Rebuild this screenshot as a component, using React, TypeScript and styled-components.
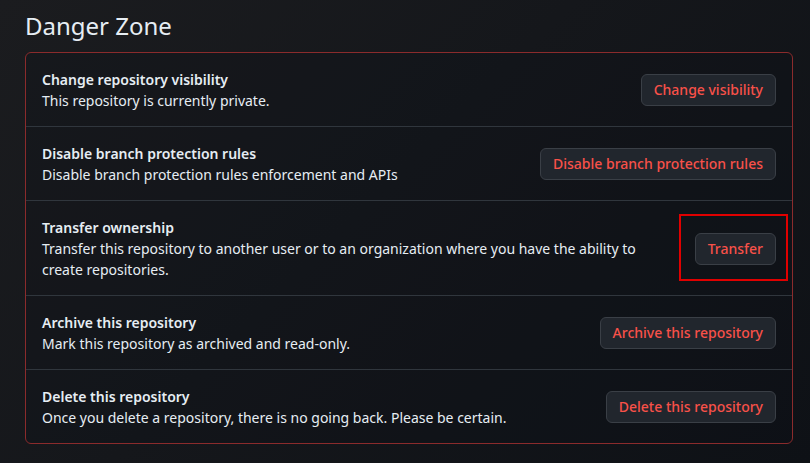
import React from "react";
import styled, { createGlobalStyle } from "styled-components";

const Global = createGlobalStyle`
  html, body { margin: 0; padding: 0; }
  body {
    width: 810px;
    height: 463px;
    overflow: hidden;
    font-family: "Noto Sans", "Open Sans", sans-serif;
    color: #e6edf3;
    background: linear-gradient(135deg, #1b1c1f 0%, #15171b 45%, #0e1116 100%);
  }
`;

const Page = styled.div`
  padding: 8px 17px 0 25px;
  height: 463px;
  box-sizing: border-box;
`;

const Heading = styled.h2`
  margin: 0 0 8px;
  font-size: 24px;
  line-height: 36px;
  font-weight: 400;
  color: #e6edf3;
`;

const Box = styled.div`
  border: 1px solid #8b2b2c;
  border-radius: 6px;
  display: flex;
  flex-direction: column;
  background: rgba(13, 17, 23, 0.25);
`;

const Row = styled.div<{ $last?: boolean }>`
  display: flex;
  align-items: center;
  gap: 16px;
  padding: 16px 16px 15px;
  border-bottom: ${(p) => (p.$last ? "none" : "1px solid #30363d")};
`;

const Info = styled.div`
  flex: 1;
  min-width: 0;
  font-size: 14px;
  line-height: 21px;
`;

const Title = styled.div`
  font-weight: 600;
  color: #e6edf3;
`;

const Desc = styled.div`
  color: #e6edf3;
`;

const BtnWrap = styled.div`
  position: relative;
  flex-shrink: 0;
`;

const Button = styled.button`
  height: 32px;
  padding: 0 12px;
  border: 1px solid #3a3f46;
  border-radius: 6px;
  background: #21262d;
  color: #f85149;
  font-family: "Noto Sans", "Open Sans", sans-serif;
  font-size: 14px;
  font-weight: 500;
  line-height: 20px;
  cursor: pointer;
  white-space: nowrap;
`;

const Highlight = styled.div`
  position: absolute;
  top: -19px;
  left: -16px;
  right: -12px;
  bottom: -16px;
  border: 2px solid #e00000;
  pointer-events: none;
`;

const rows = [
  {
    title: "Change repository visibility",
    desc: "This repository is currently private.",
    btn: "Change visibility",
  },
  {
    title: "Disable branch protection rules",
    desc: "Disable branch protection rules enforcement and APIs",
    btn: "Disable branch protection rules",
  },
  {
    title: "Transfer ownership",
    desc: "Transfer this repository to another user or to an organization where you have the ability to create repositories.",
    btn: "Transfer",
    highlight: true,
  },
  {
    title: "Archive this repository",
    desc: "Mark this repository as archived and read-only.",
    btn: "Archive this repository",
  },
  {
    title: "Delete this repository",
    desc: "Once you delete a repository, there is no going back. Please be certain.",
    btn: "Delete this repository",
  },
];

export default function App() {
  return (
    <>
      <Global />
      <Page>
        <Heading>Danger Zone</Heading>
        <Box>
          {rows.map((r, i) => (
            <Row key={r.title} $last={i === rows.length - 1}>
              <Info>
                <Title>{r.title}</Title>
                <Desc>{r.desc}</Desc>
              </Info>
              <BtnWrap>
                <Button>{r.btn}</Button>
                {r.highlight && <Highlight />}
              </BtnWrap>
            </Row>
          ))}
        </Box>
      </Page>
    </>
  );
}
